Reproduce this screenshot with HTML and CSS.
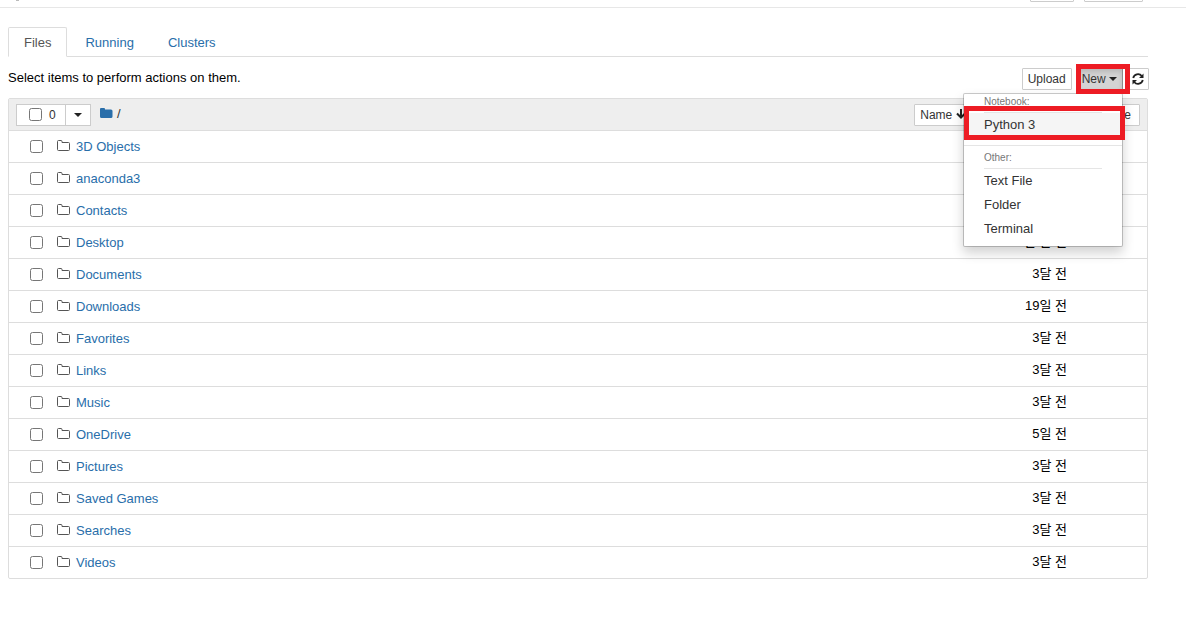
FILE: index.html
```html
<!DOCTYPE html>
<html lang="ko">
<head>
    <meta charset="UTF-8">
    <meta name="viewport" content="width=device-width, initial-scale=1.0">
    <title>Home Page - Select or create a notebook</title>
    <link rel="stylesheet" href="styles.css">
</head>
<body>
    <header class="site-header">
        <span class="logo-tail"></span>
        <button class="btn header-quit" aria-label="Quit"></button>
        <button class="btn header-logout" aria-label="Logout"></button>
    </header>

    <svg class="icon-defs">
        <symbol id="folder" viewBox="0 0 14 12">
            <path d="M.5 1.500 q0-1 1-1 h2.500 q1 0 1 1 v1 h6.500 q1 0 1 1 v6 q0 1-1 1 h-10 q-1 0-1-1 z" fill="none" stroke="#555" stroke-width="1"/>
        </symbol>
    </svg>

    <main class="container">
        <nav class="tabs">
            <a class="tab active" href="#files">Files</a>
            <a class="tab" href="#running">Running</a>
            <a class="tab" href="#clusters">Clusters</a>
        </nav>

        <section class="toolbar">
            <p class="toolbar-text">Select items to perform actions on them.</p>
            <div class="toolbar-buttons">
                <button class="btn">Upload</button>
                <div class="dropdown">
                    <button class="btn btn-new">New <span class="caret"></span></button>
                    <span class="highlight highlight-new"></span>
                    <ul class="menu">
                        <li class="menu-header">Notebook:</li>
                        <li class="menu-item selected"><a href="#python3">Python 3</a><span class="highlight highlight-python"></span></li>
                        <li class="menu-divider"></li>
                        <li class="menu-header">Other:</li>
                        <li class="menu-item"><a href="#text">Text File</a></li>
                        <li class="menu-item"><a href="#folder">Folder</a></li>
                        <li class="menu-item"><a href="#terminal">Terminal</a></li>
                    </ul>
                </div>
                <button class="btn btn-refresh" aria-label="Refresh">
                    <svg width="12" height="12" viewBox="0 0 12 12">
                        <path d="M1.200 5 A4.900 4.900 0 0 1 9.800 3 M10.800 7 A4.900 4.900 0 0 1 2.200 9" fill="none" stroke="#222" stroke-width="1.800"/>
                        <path d="M11.500 .5 V5 H7 z M.5 11.500 V7 H5 z" fill="#222"/>
                    </svg>
                </button>
            </div>
        </section>

        <section class="file-list">
            <div class="list-header">
                <div class="select-group">
                    <label class="select-all"><input type="checkbox"> 0</label>
                    <button class="select-menu" aria-label="Select"><span class="caret"></span></button>
                </div>
                <a class="breadcrumb" href="#root" aria-label="Home">
                    <svg width="13" height="12" viewBox="0 0 13 12">
                        <path d="M0 2 Q0 1 1 1 H4 Q5 1 5 2 V2.500 H11 Q12.500 2.500 12.500 4 V9.500 Q12.500 11 11 11 H1.500 Q0 11 0 9.500 z" fill="#296eaa"/>
                    </svg>
                </a>
                <span class="slash">/</span>
                <div class="sort-buttons">
                    <button class="btn">Name
                        <svg width="10" height="10" viewBox="0 0 10 10">
                            <path d="M5 0 V8 M1 4.500 L5 8.500 L9 4.500" fill="none" stroke="#222" stroke-width="2"/>
                        </svg>
                    </button>
                    <button class="btn">Last Modified</button>
                    <button class="btn sort-size">File size</button>
                </div>
            </div>
            <ul class="rows">
                <li class="row"><input type="checkbox" aria-label="3D Objects"><svg class="folder"><use href="#folder"/></svg><a href="#">3D Objects</a><span class="modified">3달 전</span></li>
                <li class="row"><input type="checkbox" aria-label="anaconda3"><svg class="folder"><use href="#folder"/></svg><a href="#">anaconda3</a><span class="modified">3달 전</span></li>
                <li class="row"><input type="checkbox" aria-label="Contacts"><svg class="folder"><use href="#folder"/></svg><a href="#">Contacts</a><span class="modified">3달 전</span></li>
                <li class="row"><input type="checkbox" aria-label="Desktop"><svg class="folder"><use href="#folder"/></svg><a href="#">Desktop</a><span class="modified">한 달 전</span></li>
                <li class="row"><input type="checkbox" aria-label="Documents"><svg class="folder"><use href="#folder"/></svg><a href="#">Documents</a><span class="modified">3달 전</span></li>
                <li class="row"><input type="checkbox" aria-label="Downloads"><svg class="folder"><use href="#folder"/></svg><a href="#">Downloads</a><span class="modified">19일 전</span></li>
                <li class="row"><input type="checkbox" aria-label="Favorites"><svg class="folder"><use href="#folder"/></svg><a href="#">Favorites</a><span class="modified">3달 전</span></li>
                <li class="row"><input type="checkbox" aria-label="Links"><svg class="folder"><use href="#folder"/></svg><a href="#">Links</a><span class="modified">3달 전</span></li>
                <li class="row"><input type="checkbox" aria-label="Music"><svg class="folder"><use href="#folder"/></svg><a href="#">Music</a><span class="modified">3달 전</span></li>
                <li class="row"><input type="checkbox" aria-label="OneDrive"><svg class="folder"><use href="#folder"/></svg><a href="#">OneDrive</a><span class="modified">5일 전</span></li>
                <li class="row"><input type="checkbox" aria-label="Pictures"><svg class="folder"><use href="#folder"/></svg><a href="#">Pictures</a><span class="modified">3달 전</span></li>
                <li class="row"><input type="checkbox" aria-label="Saved Games"><svg class="folder"><use href="#folder"/></svg><a href="#">Saved Games</a><span class="modified">3달 전</span></li>
                <li class="row"><input type="checkbox" aria-label="Searches"><svg class="folder"><use href="#folder"/></svg><a href="#">Searches</a><span class="modified">3달 전</span></li>
                <li class="row"><input type="checkbox" aria-label="Videos"><svg class="folder"><use href="#folder"/></svg><a href="#">Videos</a><span class="modified">3달 전</span></li>
            </ul>
        </section>
    </main>
</body>
</html>
```

FILE: styles.css
```css
* {
    box-sizing: border-box;
}

body {
    margin: 0;
    background: #fff;
    color: #000;
    font-family: "Liberation Sans", "Noto Sans CJK KR", sans-serif;
    font-size: 13px;
    line-height: 18px;
}

a {
    color: #296eaa;
    text-decoration: none;
}

ul,
p {
    margin: 0;
    padding: 0;
    list-style: none;
}

input[type="checkbox"] {
    width: 13px;
    height: 13px;
    margin: 0;
}

.icon-defs {
    display: none;
}

.btn {
    height: 22px;
    padding: 0 5px;
    border: 1px solid #ccc;
    border-radius: 1px;
    background: #fff;
    color: #333;
    font-family: inherit;
    font-size: 12px;
    line-height: 18px;
    white-space: nowrap;
}

.caret {
    display: inline-block;
    border-top: 4px solid #222;
    border-left: 4px solid transparent;
    border-right: 4px solid transparent;
    vertical-align: middle;
}

/* header */
.site-header {
    display: flex;
    align-items: flex-end;
    gap: 10px;
    height: 8px;
    padding: 0 43px 5px 16px;
    border-bottom: 1px solid #e7e7e7;
    overflow: hidden;
}

.logo-tail {
    width: 3px;
    height: 2px;
    margin-right: auto;
    border-top: 1px solid #bbb;
}

.header-quit {
    width: 44px;
}

.header-logout {
    width: 59px;
}

/* tabs */
.container {
    padding: 19px 38px 0 8px;
}

.tabs {
    display: flex;
    gap: 2px;
    border-bottom: 1px solid #ddd;
}

.tab {
    margin-bottom: -1px;
    padding: 6px 15px 4px;
    border: 1px solid transparent;
    border-radius: 2px 2px 0 0;
}

.tab.active {
    border-color: #ddd #ddd #fff;
    background: #fff;
    color: #555;
}

/* toolbar */
.toolbar {
    display: flex;
    justify-content: space-between;
    align-items: center;
    height: 41px;
}

.toolbar-buttons {
    display: flex;
    gap: 4px;
    margin-right: -1px;
    padding-top: 2px;
}

.dropdown {
    position: relative;
}

.btn-new {
    display: block;
    border-color: #8c8c8c;
    background: #d4d4d4;
    box-shadow: inset 0 3px 5px rgba(0, 0, 0, 0.13);
}

.btn-refresh {
    display: flex;
    align-items: center;
    justify-content: center;
    width: 22px;
    padding: 0;
}

.menu {
    position: absolute;
    top: 25px;
    right: 0;
    z-index: 10;
    width: 160px;
    padding-bottom: 5px;
    border: 1px solid rgba(0, 0, 0, 0.2);
    border-radius: 2px;
    background: #fff;
    background-clip: padding-box;
    box-shadow: 0 6px 12px rgba(0, 0, 0, 0.18);
}

.menu-header {
    margin: 0 20px;
    padding-bottom: 3px;
    border-bottom: 1px solid #e5e5e5;
    color: #777;
    font-size: 10px;
    line-height: 15px;
}

.menu-item {
    position: relative;
}

.menu-item a {
    display: block;
    padding: 3px 20px;
    color: #333;
}

.menu-item.selected {
    background: #f5f5f5;
}

.menu-divider {
    height: 1px;
    margin: 8px 0 4px;
    background: #e5e5e5;
}

.highlight {
    position: absolute;
    border: 5px solid #ed1c24;
    pointer-events: none;
}

.highlight-new {
    inset: -4px -7px -4px 0;
    z-index: 11;
}

.highlight-python {
    inset: -7px -3px -3px 0;
}

/* file list */
.file-list {
    border: 1px solid #ddd;
    border-radius: 2px;
}

.list-header {
    display: flex;
    align-items: center;
    height: 31px;
    padding: 0 7px;
    background: #eee;
}

.select-group {
    display: flex;
    width: 75px;
    height: 22px;
    border: 1px solid #ccc;
    background: #fff;
}

.select-all {
    display: flex;
    flex: 1;
    align-items: center;
    gap: 7px;
    padding-left: 12px;
    color: #333;
    font-size: 12px;
}

.select-menu {
    width: 25px;
    padding: 0;
    border: 0;
    border-left: 1px solid #ccc;
    background: #fff;
    line-height: 18px;
}

.breadcrumb {
    display: flex;
    margin-left: 9px;
    padding-bottom: 3px;
}

.slash {
    padding: 0 0 2px 4px;
    color: #333;
}

.sort-buttons {
    display: flex;
    gap: 13px;
    margin-left: auto;
}

.sort-size {
    padding-right: 8px;
}

.row {
    display: flex;
    align-items: center;
    height: 32px;
    padding: 0 80px 0 21px;
    border-top: 1px solid #ddd;
}

.folder {
    width: 14px;
    height: 12px;
    margin: 0 5px 1px 14px;
}

.modified {
    margin-left: auto;
    padding-bottom: 2px;
}
```
